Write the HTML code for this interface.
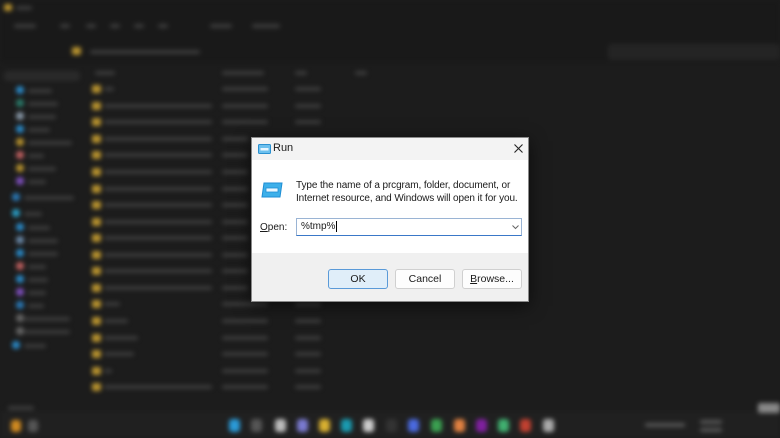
<!DOCTYPE html>
<html><head><meta charset="utf-8"><style>
*{margin:0;padding:0;box-sizing:border-box}
body{width:780px;height:438px;overflow:hidden;background:#1c1c1c;font-family:"Liberation Sans",sans-serif;position:relative}
#bg{position:absolute;inset:0;filter:blur(2.5px)}
.a{position:absolute}
.f{position:absolute;width:9px;height:8px;background:#b8932f;border-radius:2px;left:92px}
.t{position:absolute;height:4px;background:#3c3c3c;border-radius:2px}
.s{position:absolute;width:8px;height:8px;border-radius:50%;left:16px}
.tb{position:absolute;top:419px;width:11px;height:13px;border-radius:3px}
#dlg{position:absolute;left:251px;top:137px;width:278px;height:165px;background:#fff;border:1px solid #8a8a8a;box-shadow:0 4px 16px rgba(0,0,0,.6)}
.btn{position:absolute;top:131px;height:20px;width:60px;background:#fdfdfd;border:1px solid #d0d0d0;border-radius:3px;font-size:10.5px;color:#1a1a1a;text-align:center;line-height:18px}
</style></head><body>
<div id="bg">
<div class="a" style="left:0;top:0;width:780px;height:62px;background:#191919"></div>
<div class="a" style="left:4px;top:4px;width:8px;height:7px;background:#b8932f;border-radius:2px"></div>
<div class="t" style="left:16px;top:6px;width:16px"></div>
<div class="t" style="left:14px;top:24px;width:22px"></div>
<div class="t" style="left:60px;top:24px;width:10px"></div><div class="t" style="left:86px;top:24px;width:10px"></div><div class="t" style="left:110px;top:24px;width:10px"></div><div class="t" style="left:134px;top:24px;width:10px"></div><div class="t" style="left:158px;top:24px;width:10px"></div><div class="t" style="left:210px;top:24px;width:22px"></div><div class="t" style="left:252px;top:24px;width:28px"></div>
<div class="a" style="left:72px;top:47px;width:9px;height:8px;background:#b8932f;border-radius:2px"></div>
<div class="t" style="left:90px;top:50px;width:110px"></div>
<div class="a" style="left:608px;top:44px;width:172px;height:16px;background:#242424;border-radius:3px"></div>
<div class="t" style="left:95px;top:71px;width:20px"></div><div class="t" style="left:222px;top:71px;width:42px"></div><div class="t" style="left:295px;top:71px;width:12px"></div><div class="t" style="left:355px;top:71px;width:12px"></div>
<div class="a" style="left:4px;top:71px;width:76px;height:10px;background:#2a2a2a;border-radius:3px"></div>
<div class="s" style="top:86px;background:#2a8ac8"></div><div class="s" style="top:99px;background:#2a7a6a"></div><div class="s" style="top:112px;background:#8a9aaa"></div><div class="s" style="top:125px;background:#2a8ac8"></div><div class="s" style="top:138px;background:#b8932f"></div><div class="s" style="top:151px;background:#c06060"></div><div class="s" style="top:164px;background:#b8932f"></div><div class="s" style="top:177px;background:#8050c0"></div><div class="s" style="left:12px;top:193px;background:#2a7ab8"></div><div class="s" style="left:12px;top:209px;background:#2aa0c8"></div><div class="s" style="top:223px;background:#2a8ac8"></div><div class="s" style="top:236px;background:#6a8aaa"></div><div class="s" style="top:249px;background:#2a8ac8"></div><div class="s" style="top:262px;background:#c06060"></div><div class="s" style="top:275px;background:#2a8ac8"></div><div class="s" style="top:288px;background:#8050c0"></div><div class="s" style="top:301px;background:#2a7ab8"></div><div class="s" style="top:314px;background:#666"></div><div class="s" style="top:327px;background:#666"></div><div class="s" style="left:12px;top:341px;background:#2a8ac8"></div>
<div class="t" style="left:28px;top:89px;width:24px"></div><div class="t" style="left:28px;top:102px;width:30px"></div><div class="t" style="left:28px;top:115px;width:28px"></div><div class="t" style="left:28px;top:128px;width:22px"></div><div class="t" style="left:28px;top:141px;width:44px"></div><div class="t" style="left:28px;top:154px;width:16px"></div><div class="t" style="left:28px;top:167px;width:28px"></div><div class="t" style="left:28px;top:180px;width:18px"></div><div class="t" style="left:24px;top:196px;width:50px"></div><div class="t" style="left:24px;top:212px;width:18px"></div><div class="t" style="left:28px;top:226px;width:22px"></div><div class="t" style="left:28px;top:239px;width:30px"></div><div class="t" style="left:28px;top:252px;width:30px"></div><div class="t" style="left:28px;top:265px;width:18px"></div><div class="t" style="left:28px;top:278px;width:20px"></div><div class="t" style="left:28px;top:291px;width:18px"></div><div class="t" style="left:28px;top:304px;width:16px"></div><div class="t" style="left:24px;top:317px;width:46px"></div><div class="t" style="left:24px;top:330px;width:46px"></div><div class="t" style="left:24px;top:344px;width:22px"></div>
<div class="f" style="top:85px"></div><div class="t" style="left:104px;top:87px;width:10px"></div><div class="t" style="left:222px;top:87px;width:46px"></div><div class="t" style="left:295px;top:87px;width:26px"></div>
<div class="f" style="top:102px"></div><div class="t" style="left:104px;top:104px;width:108px"></div><div class="t" style="left:222px;top:104px;width:46px"></div><div class="t" style="left:295px;top:104px;width:26px"></div>
<div class="f" style="top:118px"></div><div class="t" style="left:104px;top:120px;width:108px"></div><div class="t" style="left:222px;top:120px;width:46px"></div><div class="t" style="left:295px;top:120px;width:26px"></div>
<div class="f" style="top:135px"></div><div class="t" style="left:104px;top:137px;width:108px"></div><div class="t" style="left:222px;top:137px;width:26px"></div>
<div class="f" style="top:151px"></div><div class="t" style="left:104px;top:153px;width:108px"></div><div class="t" style="left:222px;top:153px;width:26px"></div>
<div class="f" style="top:168px"></div><div class="t" style="left:104px;top:170px;width:108px"></div><div class="t" style="left:222px;top:170px;width:26px"></div>
<div class="f" style="top:185px"></div><div class="t" style="left:104px;top:187px;width:108px"></div><div class="t" style="left:222px;top:187px;width:26px"></div>
<div class="f" style="top:201px"></div><div class="t" style="left:104px;top:203px;width:108px"></div><div class="t" style="left:222px;top:203px;width:26px"></div>
<div class="f" style="top:218px"></div><div class="t" style="left:104px;top:220px;width:108px"></div><div class="t" style="left:222px;top:220px;width:26px"></div>
<div class="f" style="top:234px"></div><div class="t" style="left:104px;top:236px;width:108px"></div><div class="t" style="left:222px;top:236px;width:26px"></div>
<div class="f" style="top:251px"></div><div class="t" style="left:104px;top:253px;width:108px"></div><div class="t" style="left:222px;top:253px;width:26px"></div>
<div class="f" style="top:267px"></div><div class="t" style="left:104px;top:269px;width:108px"></div><div class="t" style="left:222px;top:269px;width:26px"></div>
<div class="f" style="top:284px"></div><div class="t" style="left:104px;top:286px;width:108px"></div><div class="t" style="left:222px;top:286px;width:26px"></div>
<div class="f" style="top:300px"></div><div class="t" style="left:104px;top:302px;width:16px"></div><div class="t" style="left:222px;top:302px;width:46px"></div><div class="t" style="left:295px;top:302px;width:26px"></div>
<div class="f" style="top:317px"></div><div class="t" style="left:104px;top:319px;width:24px"></div><div class="t" style="left:222px;top:319px;width:46px"></div><div class="t" style="left:295px;top:319px;width:26px"></div>
<div class="f" style="top:334px"></div><div class="t" style="left:104px;top:336px;width:34px"></div><div class="t" style="left:222px;top:336px;width:46px"></div><div class="t" style="left:295px;top:336px;width:26px"></div>
<div class="f" style="top:350px"></div><div class="t" style="left:104px;top:352px;width:30px"></div><div class="t" style="left:222px;top:352px;width:46px"></div><div class="t" style="left:295px;top:352px;width:26px"></div>
<div class="f" style="top:367px"></div><div class="t" style="left:104px;top:369px;width:8px"></div><div class="t" style="left:222px;top:369px;width:46px"></div><div class="t" style="left:295px;top:369px;width:26px"></div>
<div class="f" style="top:383px"></div><div class="t" style="left:104px;top:385px;width:108px"></div><div class="t" style="left:222px;top:385px;width:46px"></div><div class="t" style="left:295px;top:385px;width:26px"></div>
<div class="t" style="left:8px;top:406px;width:26px"></div>
<div class="a" style="left:0;top:411px;width:780px;height:27px;background:#202020"></div>
<div class="a" style="left:11px;top:420px;width:10px;height:12px;background:#d08a20;border-radius:3px"></div>
<div class="a" style="left:28px;top:420px;width:10px;height:12px;background:#555;border-radius:3px"></div>
<div class="tb" style="left:229px;background:#2a9ad8"></div><div class="tb" style="left:251px;background:#555"></div><div class="tb" style="left:275px;background:#bbb"></div><div class="tb" style="left:297px;background:#7a7ad0"></div><div class="tb" style="left:319px;background:#d8b030"></div><div class="tb" style="left:341px;background:#1a9ab0"></div><div class="tb" style="left:363px;background:#ccc"></div><div class="tb" style="left:386px;background:#333"></div><div class="tb" style="left:408px;background:#4a6ae0"></div><div class="tb" style="left:431px;background:#3aa050"></div><div class="tb" style="left:454px;background:#e08040"></div><div class="tb" style="left:476px;background:#8020a0"></div><div class="tb" style="left:498px;background:#40b070"></div><div class="tb" style="left:520px;background:#c04030"></div><div class="tb" style="left:543px;background:#aaa"></div>
<div class="t" style="left:645px;top:423px;width:40px;background:#555"></div><div class="t" style="left:700px;top:420px;width:22px;background:#555"></div><div class="t" style="left:700px;top:428px;width:22px;background:#555"></div>
<div class="a" style="left:758px;top:403px;width:22px;height:10px;background:#888;border-radius:2px"></div>
</div>

<div id="dlg">
<div class="a" style="left:0;top:0;width:276px;height:22px;background:#f3f3f3"></div>
<svg class="a" style="left:6px;top:6px" width="13" height="10" viewBox="0 0 13 10"><rect x="0.5" y="0.5" width="12" height="9" rx="1" fill="#6cc0ee" stroke="#2a90d0"/><rect x="2.5" y="4" width="8" height="2.5" fill="#e8f6ff"/></svg>
<div class="a" style="left:21px;top:4px;font-size:11px;color:#1a1a1a">Run</div>
<svg class="a" style="left:262px;top:6px" width="9" height="9" viewBox="0 0 9 9"><path d="M0.5 0.5L8.5 8.5M8.5 0.5L0.5 8.5" stroke="#222" stroke-width="1.1"/></svg>
<svg class="a" style="left:9px;top:44px" width="22" height="16" viewBox="0 0 22 16"><path d="M3 1H21L19 15H1Z" fill="#3db0ea" stroke="#1e8ed4" stroke-width="1"/><rect x="5" y="6" width="12" height="4" fill="#e9f7ff" stroke="#1e8ed4" stroke-width=".8"/></svg>
<div class="a" style="left:44px;top:41px;font-size:10px;line-height:13px;color:#1a1a1a;white-space:nowrap;letter-spacing:-0.1px">Type the name of a prcgram, folder, document, or<br>Internet resource, and Windows will open it for you.</div>
<div class="a" style="left:8px;top:84px;font-size:10px;color:#1a1a1a"><u>O</u>pen:</div>
<div class="a" style="left:44px;top:80px;width:226px;height:18px;border:1px solid #9ab4d4;border-bottom:1px solid #3a78c8;background:#fff"></div>
<div class="a" style="left:49px;top:83px;font-size:10px;color:#1a1a1a">%tmp%<span style="border-left:1px solid #000;margin-left:1px"></span></div>
<svg class="a" style="left:260px;top:87px" width="7" height="5" viewBox="0 0 7 5"><path d="M0.5 0.5L3.5 3.5L6.5 0.5" fill="none" stroke="#666"/></svg>
<div class="a" style="left:0;top:115px;width:276px;height:48px;background:#f0f0f0"></div>
<div class="btn" style="left:76px;background:#e0eef9;border-color:#5a9ad8">OK</div>
<div class="btn" style="left:143px">Cancel</div>
<div class="btn" style="left:210px"><u>B</u>rowse...</div>
</div>
</body></html>
